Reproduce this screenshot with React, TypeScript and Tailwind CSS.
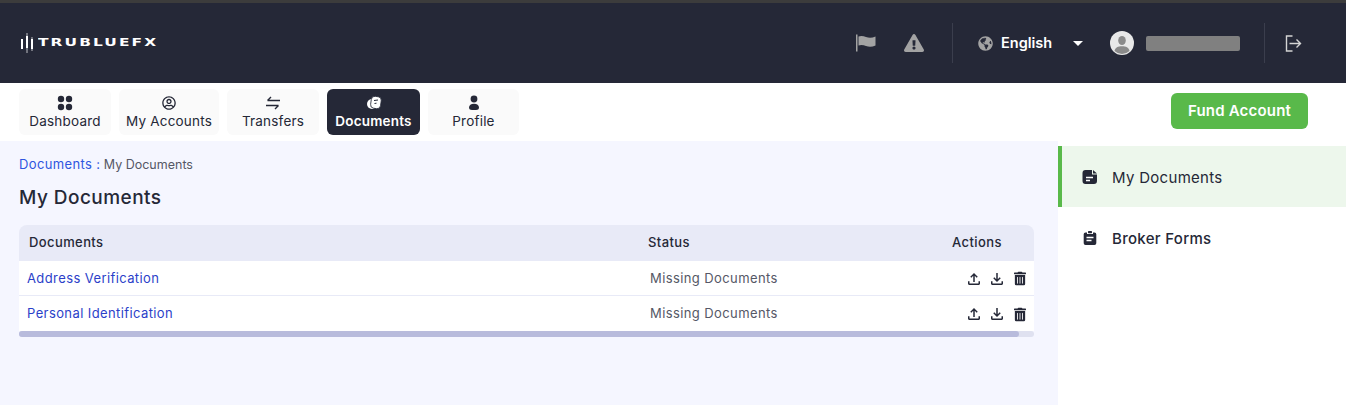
import { FaExclamationTriangle, FaGlobeAmericas, FaRegUserCircle, FaTrashAlt } from 'react-icons/fa';
import { MdOutlineFileDownload, MdOutlineFileUpload } from 'react-icons/md';

const FONT = 'font-["Inter","Noto_Sans",sans-serif]';

function DashIcon() {
  return (
    <svg viewBox="0 0 16 16" className="w-[16px] h-[16px]" fill="currentColor" aria-hidden="true">
      <circle cx="4" cy="4" r="3.2" />
      <circle cx="12" cy="4" r="3.2" />
      <circle cx="4" cy="12" r="3.2" />
      <circle cx="12" cy="12" r="3.2" />
    </svg>
  );
}

function TransferIcon() {
  return (
    <svg viewBox="0 0 16 16" className="w-[16px] h-[16px]" fill="none" stroke="currentColor" strokeWidth="1.4" aria-hidden="true">
      <path d="M15 5.5H2.5M6 2 2.5 5.5" />
      <path d="M1 10.5h12.5M10 14l3.5-3.5" />
    </svg>
  );
}

function DocsIcon() {
  return (
    <svg viewBox="0 0 16 16" className="w-[16px] h-[16px]" aria-hidden="true">
      <circle cx="6" cy="9" r="5" fill="#fff" />
      <rect x="5" y="1.500" width="10" height="12" rx="3.500" transform="rotate(8 10 7)" fill="#fff" stroke="#252837" strokeWidth="0.800" />
      <path d="M8 5.500 12 5M8.500 8.500 10.500 8.200" stroke="#252837" strokeWidth="1" />
    </svg>
  );
}

function ProfileIcon() {
  return (
    <svg viewBox="0 0 16 16" className="w-[16px] h-[16px]" fill="currentColor" aria-hidden="true">
      <circle cx="8" cy="4" r="3.4" />
      <path d="M3 12.500C3 10 5 8.700 8 8.700s5 1.300 5 3.800c0 1.700-1.200 2.500-3 2.500H6c-1.800 0-3-.8-3-2.500Z" />
    </svg>
  );
}

function FileIcon() {
  return (
    <svg viewBox="0 0 16 16" className="w-[16px] h-[16px]" aria-hidden="true">
      <path d="M3.500 1H10v4.500h5V12a3 3 0 0 1-3 3H3.500a3 3 0 0 1-3-3V4a3 3 0 0 1 3-3Z" fill="#252837" />
      <path d="M11 1l4 3.500h-4Z" fill="#252837" />
      <path d="M4 8.500h7M4 11.500h4" stroke="#fff" strokeWidth="1.300" />
    </svg>
  );
}

function ClipboardIcon() {
  return (
    <svg viewBox="0 0 16 16" className="w-[16px] h-[16px]" aria-hidden="true">
      <path d="M5 2.500H3.500A1.800 1.800 0 0 0 1.700 4.300v9A1.800 1.800 0 0 0 3.500 15h9a1.800 1.800 0 0 0 1.800-1.700v-9a1.800 1.800 0 0 0-1.800-1.800H11V4H5Z" fill="#252837" />
      <rect x="6" y="1" width="4" height="2.200" rx="0.600" fill="#252837" />
      <path d="M4.500 7.500h7M4.500 10.500h5" stroke="#fff" strokeWidth="1.300" />
    </svg>
  );
}

function FlagIcon() {
  return (
    <svg viewBox="0 0 20 18" className="w-[20px] h-[18px]" fill="#a3a3a3" aria-hidden="true">
      <rect x="0" y="0.500" width="1.500" height="17" />
      <path d="M2.500 2.500C5 1.500 7.500 2 10 3c3 1 6 1 9.500-.5v9c-3.500 1.500-6.500 1.500-9.500.5-2.500-1-5-1.500-7.500-.5Z" />
    </svg>
  );
}

function LogoutIcon() {
  return (
    <svg viewBox="0 0 17 17" className="w-[17px] h-[17px]" fill="none" stroke="#d4d4d4" strokeWidth="1.400" aria-hidden="true">
      <path d="M7.500 1H1.500v15h6" />
      <path d="M4.500 8.500h11M11.500 4.500l4 4-4 4" />
    </svg>
  );
}

function Avatar() {
  return (
    <svg viewBox="0 0 24 24" className="w-[24px] h-[24px]" aria-hidden="true">
      <circle cx="12" cy="12" r="12" fill="#e8e8e8" />
      <ellipse cx="12" cy="9.500" rx="3.800" ry="4.600" fill="#8a8a8a" />
      <path d="M4.500 20c.6-3.500 3.500-4.800 7.500-4.800s6.900 1.300 7.500 4.800A11.500 11.500 0 0 1 12 23a11.500 11.500 0 0 1-7.500-3Z" fill="#8a8a8a" />
    </svg>
  );
}

function LogoMark() {
  return (
    <svg viewBox="0 0 14 22" className="w-[14px] h-[22px]" fill="#fff" aria-hidden="true">
      <rect x="1" y="7" width="2" height="10" />
      <rect x="6" y="4" width="2" height="12" />
      <rect x="6.500" y="1" width="1" height="20" opacity="0.700" />
      <rect x="11" y="7" width="2" height="10" />
      <rect x="11.500" y="5" width="1" height="14" opacity="0.700" />
    </svg>
  );
}

const TABS = [
  { label: 'Dashboard', icon: <DashIcon />, width: 'w-[92px]' },
  { label: 'My Accounts', icon: <FaRegUserCircle className="w-[14px] h-[14px]" />, width: 'w-[100px]' },
  { label: 'Transfers', icon: <TransferIcon />, width: 'w-[92px]' },
  { label: 'Documents', icon: <DocsIcon />, width: 'w-[93px]', active: true },
  { label: 'Profile', icon: <ProfileIcon />, width: 'w-[91px]' },
];

const ROWS = ['Address Verification', 'Personal Identification'];

export default function App() {
  return (
    <div className={`${FONT} h-[405px] overflow-hidden bg-white text-[#252837]`}>
      <div className="h-[3px] bg-[#3c3c3c]" />

      {/* Top bar */}
      <header className="h-[80px] bg-[#252837] flex items-center pl-[20px] pr-[44px]">
        <div className="flex items-center gap-[4px]">
          <LogoMark />
          <span className="font-['DejaVu_Sans',sans-serif] font-bold text-[11px] tracking-[1.5px] text-white scale-x-[1.4] origin-left">TRUBLUEFX</span>
        </div>
        <div className="ml-auto flex items-center">
          <FlagIcon />
          <FaExclamationTriangle className="ml-[28px] w-[20px] h-[18px] text-[#a3a3a3]" />
          <div className="ml-[28px] w-px h-[40px] bg-[#3b3e4d]" />
          <FaGlobeAmericas className="ml-[25px] w-[15px] h-[15px] text-[#a3a3a3]" />
          <span className="ml-[8px] w-[62px] text-[14.500px] font-semibold text-white">English</span>
          <span className="ml-[10px] w-0 h-0 border-x-[5px] border-x-transparent border-t-[5px] border-t-white" />
          <div className="ml-[27px]"><Avatar /></div>
          <div className="ml-[12px] w-[94px] h-[15px] rounded-[2px] bg-[#808080]" />
          <div className="ml-[24px] w-px h-[40px] bg-[#3b3e4d]" />
          <div className="ml-[20px]"><LogoutIcon /></div>
        </div>
      </header>

      {/* Nav tabs */}
      <nav className="h-[58px] flex items-start pl-[19px] pr-[38px] pt-[6px]">
        <div className="flex gap-[8px]">
          {TABS.map(t => (
            <div
              key={t.label}
              className={`${t.width} h-[46px] rounded-[6px] flex flex-col items-center justify-center gap-[1px] text-[13.500px] tracking-[0.2px] ${
                t.active ? 'bg-[#252837] text-white font-semibold' : 'bg-[#fafafa] text-[#252837]'
              }`}
            >
              <div className="h-[16px] flex items-center">{t.icon}</div>
              <span className="leading-[18px]">{t.label}</span>
            </div>
          ))}
        </div>
        <button
          type="button"
          className="ml-auto mt-[4px] w-[137px] h-[36px] rounded-[6px] bg-[#59b94a] text-white text-[15px] font-semibold tracking-[0.2px]"
        >
          Fund Account
        </button>
      </nav>

      <div className="flex h-[264px]">
        {/* Main column */}
        <main className="w-[1058px] bg-[#f5f6ff] pl-[19px] pr-[24px] pt-[15px]">
          <div className="text-[12.500px] leading-[16px] text-[#555866]">
            <span className="text-[13px] tracking-[0.36px] text-[#2f55e0]">Documents :</span> My Documents
          </div>
          <h1 className="mt-[12px] text-[19px] leading-[26px] font-medium tracking-[0.45px] text-[#252837]">My Documents</h1>

          <div className="mt-[14px] rounded-t-[8px] overflow-hidden">
            <div className="h-[36px] bg-[#e8eaf7] flex items-center text-[13px] font-medium tracking-[0.4px]">
              <span className="pl-[10px] w-[629px]">Documents</span>
              <span className="w-[304px]">Status</span>
              <span>Actions</span>
            </div>
            {ROWS.map((row, i) => (
              <div key={row} className={`h-[35px] pt-[1px] bg-white flex items-center text-[13px] tracking-[0.4px] ${i === 0 ? 'border-b border-[#e8eaf7]' : ''}`}>
                <span className="pl-[8px] w-[631px] text-[#2b3fc9]">{row}</span>
                <span className="text-[#555866]">Missing Documents</span>
                <div className="ml-auto pr-[8px] flex items-center gap-[5px] text-[#252837]">
                  <MdOutlineFileUpload className="w-[18px] h-[18px]" />
                  <MdOutlineFileDownload className="w-[18px] h-[18px]" />
                  <FaTrashAlt className="ml-[3px] w-[12px] h-[15px]" />
                </div>
              </div>
            ))}
          </div>
          <div className="h-[6px] rounded-[3px] bg-[#dfe1f0]">
            <div className="h-[6px] w-[1000px] rounded-[3px] bg-[#b8bbdc]" />
          </div>
        </main>

        {/* Side menu */}
        <aside className="flex-1 bg-white pt-[5px] text-[15px] font-medium tracking-[0.3px]">
          <div className="h-[61px] bg-[#edf7ec] border-l-[4px] border-[#59b94a] flex items-center pl-[20px] gap-[14px] font-normal">
            <FileIcon />
            <span className="pt-[3px]">My Documents</span>
          </div>
          <div className="h-[62px] flex items-center pl-[24px] gap-[14px]">
            <ClipboardIcon />
            <span className="pt-[3px]">Broker Forms</span>
          </div>
        </aside>
      </div>
    </div>
  );
}
